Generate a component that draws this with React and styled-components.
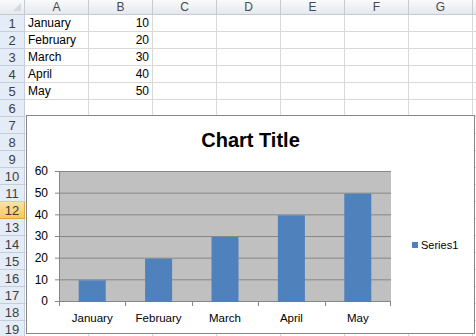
import React from "react";
import styled, { createGlobalStyle } from "styled-components";

// Data
const data = [
  { month: "January", value: 10 },
  { month: "February", value: 20 },
  { month: "March", value: 30 },
  { month: "April", value: 40 },
  { month: "May", value: 50 },
];
const columns = ["A", "B", "C", "D", "E", "F", "G", ""];
const rowCount = 19;
const activeRow = 12;

// Chart geometry (svg coordinates)
const plot = { left: 32, top: 19, width: 332, height: 130 };
const maxValue = 60;
const step = 10;

const GlobalStyle = createGlobalStyle`
  html, body {
    margin: 0;
    padding: 0;
    width: 476px;
    height: 336px;
    overflow: hidden;
    background: #ffffff;
  }
  body {
    font-family: "Liberation Sans", Arial, sans-serif;
  }
`;

const Sheet = styled.div`
  position: relative;
  width: 476px;
  height: 336px;
  overflow: hidden;
`;

const Grid = styled.div`
  display: grid;
  grid-template-columns: 25px repeat(8, 64px);
  grid-template-rows: 15px repeat(${rowCount}, 17px);
  font-size: 12px;
`;

const Corner = styled.div`
  position: relative;
  box-sizing: border-box;
  background: linear-gradient(#f9fafb, #e6e9ee);
  border-right: 1px solid #c5cbd3;
  border-bottom: 1px solid #c5cbd3;

  &::after {
    content: "";
    position: absolute;
    right: 3px;
    bottom: 3px;
    border-left: 8px solid transparent;
    border-bottom: 8px solid #d5d9de;
  }
`;

const ColHeader = styled.div`
  box-sizing: border-box;
  background: linear-gradient(#f9fafb, #e4e8ee);
  border-right: 1px solid #c5cbd3;
  border-bottom: 1px solid #c5cbd3;
  color: #4a4a4a;
  display: flex;
  align-items: center;
  justify-content: center;
  line-height: 14px;
`;

const RowHeader = styled.div`
  box-sizing: border-box;
  background: ${(p) =>
    p.$active ? "linear-gradient(#fbe3a0, #f6c957)" : "#e4ecf7"};
  border-right: 1px solid ${(p) => (p.$active ? "#e0a83c" : "#c5cdd8")};
  border-bottom: 1px solid ${(p) => (p.$active ? "#e0a83c" : "#c5cdd8")};
  color: ${(p) => (p.$active ? "#3b3b3b" : "#3f3f3f")};
  display: flex;
  align-items: center;
  justify-content: center;
  font-size: 13px;
`;

const Cell = styled.div`
  box-sizing: border-box;
  border-right: 1px solid #d9d9d9;
  border-bottom: 1px solid #d9d9d9;
  padding: 0 3px;
  line-height: 16px;
  color: #000000;
  text-align: ${(p) => (p.$number ? "right" : "left")};
  white-space: nowrap;
  overflow: visible;
`;

// Chart object floats over the cells
const ChartBox = styled.div`
  position: absolute;
  left: 26px;
  top: 115px;
  width: 449px;
  height: 219px;
  box-sizing: border-box;
  background: #ffffff;
  border: 1px solid #868686;
  display: flex;
  flex-direction: column;
`;

const Title = styled.div`
  padding-top: 12px;
  height: 24px;
  line-height: 24px;
  text-align: center;
  font-size: 20px;
  font-weight: bold;
  color: #000000;
`;

const ChartBody = styled.div`
  display: flex;
`;

const Legend = styled.div`
  margin-top: 86px;
  margin-left: 5px;
  display: flex;
  align-items: center;
  gap: 3px;
  height: 14px;
  font-size: 11px;
  color: #000000;
`;

const LegendKey = styled.span`
  width: 6px;
  height: 6px;
  background: #4f81bd;
`;

const PlotSvg = styled.svg`
  display: block;
  font-family: "Liberation Sans", Arial, sans-serif;
  font-size: 11.5px;
`;

const BarChart = () => {
  const ticks = [];
  for (let v = 0; v <= maxValue; v += step) ticks.push(v);
  const yOf = (v) => plot.top + plot.height - (v / maxValue) * plot.height;
  const catWidth = plot.width / data.length;
  const barWidth = 27;
  const bottom = plot.top + plot.height;

  return (
    <PlotSvg width="380" height="180" viewBox="0 0 380 180">
      <rect x={plot.left} y={plot.top} width={plot.width} height={plot.height} fill="#c0c0c0" />
      {ticks.map((v) => (
        <g key={v}>
          <line x1={plot.left - 4} x2={plot.left + plot.width} y1={yOf(v) + 0.5} y2={yOf(v) + 0.5} stroke="#868686" />
          <text x={plot.left - 11} y={yOf(v)} dy="0.36em" textAnchor="end" fontSize="12">
            {v}
          </text>
        </g>
      ))}
      {data.map((d, i) => {
        const top = yOf(d.value);
        return (
          <rect
            key={d.month}
            x={plot.left + i * catWidth + (catWidth - barWidth) / 2}
            y={top + 1}
            width={barWidth}
            height={bottom - top}
            fill="#4f81bd"
          />
        );
      })}
      <line x1={plot.left + 0.5} x2={plot.left + 0.5} y1={plot.top} y2={bottom + 1} stroke="#868686" />
      {data.map((d, i) => (
        <line
          key={"t" + i}
          x1={Math.round(plot.left + i * catWidth) + 0.5}
          x2={Math.round(plot.left + i * catWidth) + 0.5}
          y1={bottom}
          y2={bottom + 5}
          stroke="#868686"
        />
      ))}
      <line x1={plot.left + plot.width - 0.5} x2={plot.left + plot.width - 0.5} y1={bottom} y2={bottom + 5} stroke="#868686" />
      {data.map((d, i) => (
        <text key={"l" + i} x={plot.left + (i + 0.5) * catWidth} y={170} textAnchor="middle">
          {d.month}
        </text>
      ))}
    </PlotSvg>
  );
};

const App = () => {
  const rows = [];
  for (let r = 1; r <= rowCount; r++) {
    const item = data[r - 1];
    rows.push(
      <React.Fragment key={r}>
        <RowHeader $active={r === activeRow}>{r}</RowHeader>
        {columns.map((c, ci) => {
          let content = null;
          if (item && c === "A") content = item.month;
          if (item && c === "B") content = item.value;
          return (
            <Cell key={ci} $number={c === "B"}>
              {content}
            </Cell>
          );
        })}
      </React.Fragment>
    );
  }

  return (
    <>
      <GlobalStyle />
      <Sheet>
        <Grid>
          <Corner />
          {columns.map((c, ci) => (
            <ColHeader key={ci}>{c}</ColHeader>
          ))}
          {rows}
        </Grid>
        <ChartBox>
          <Title>Chart Title</Title>
          <ChartBody>
            <BarChart />
            <Legend>
              <LegendKey />
              Series1
            </Legend>
          </ChartBody>
        </ChartBox>
      </Sheet>
    </>
  );
};

export default App;
